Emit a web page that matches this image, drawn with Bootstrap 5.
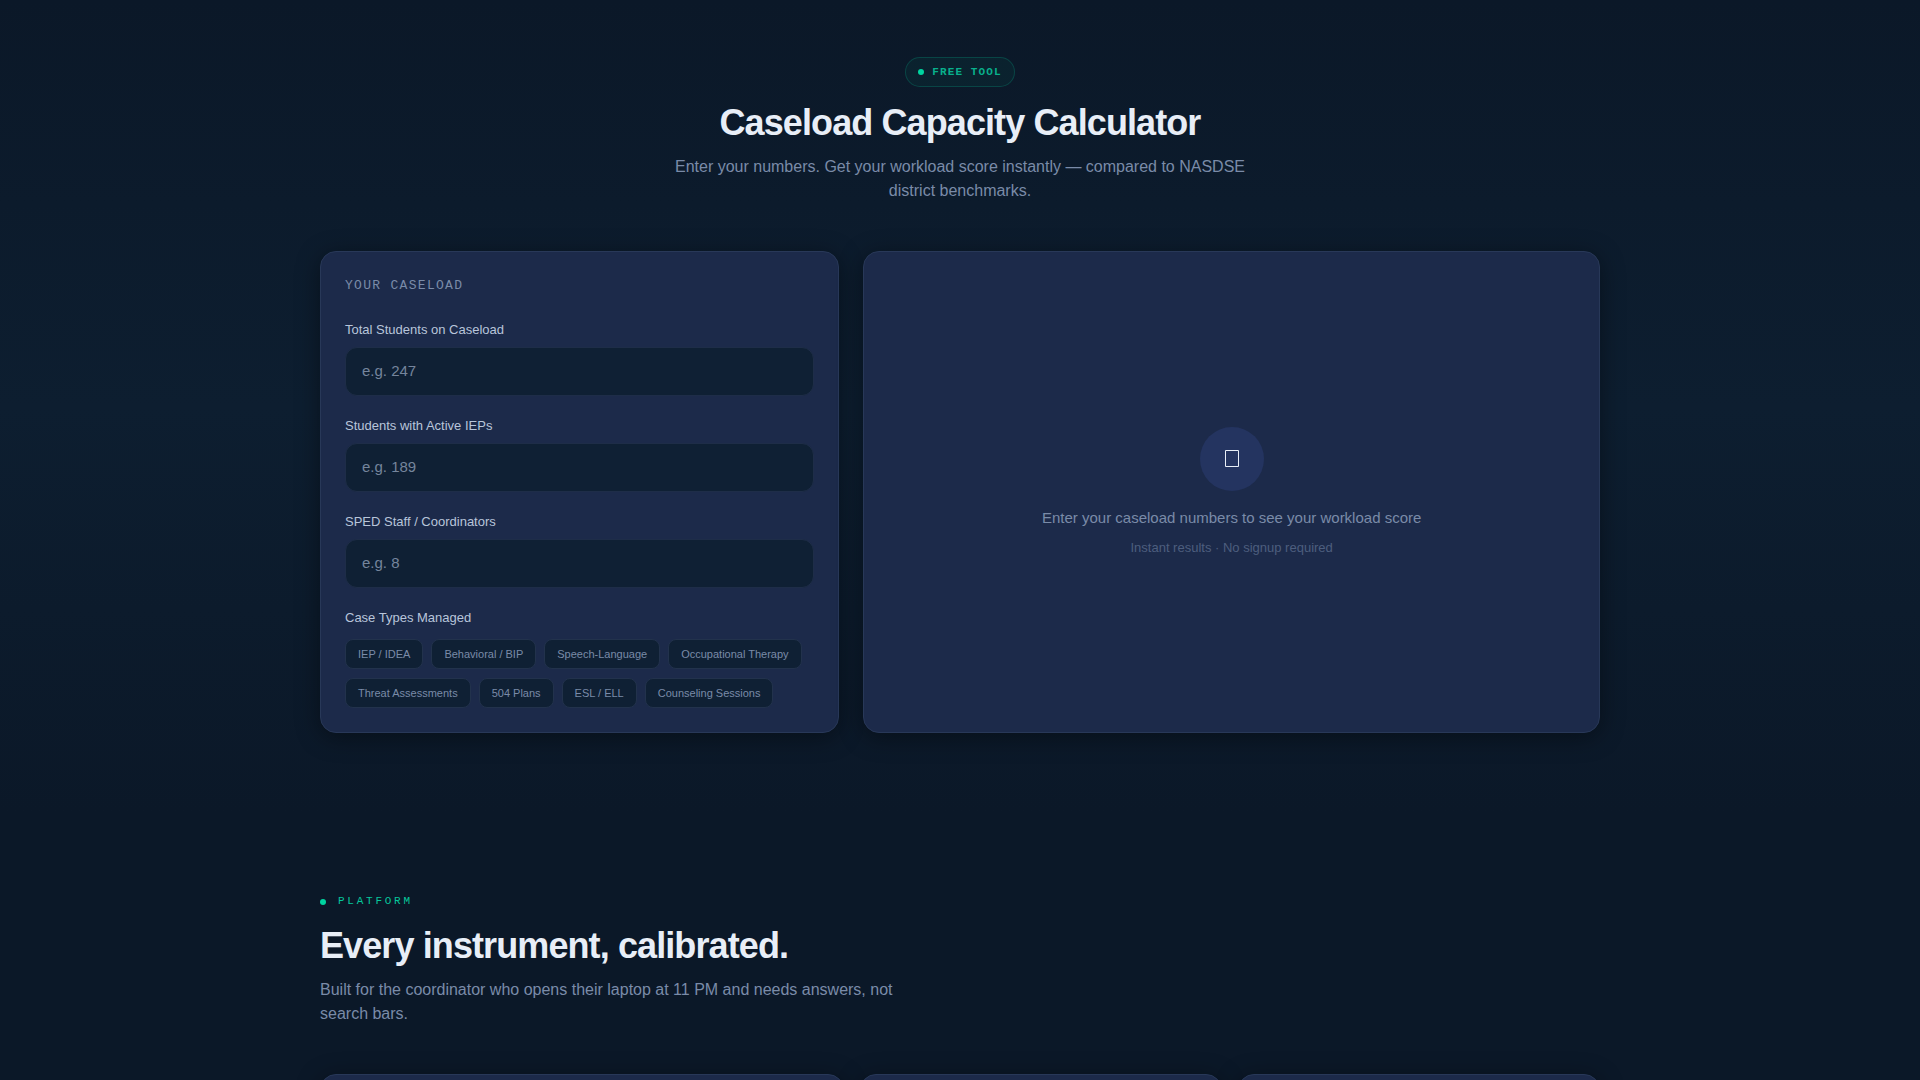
<!DOCTYPE html>
<html lang="en">
<head>
<meta charset="utf-8">
<meta name="viewport" content="width=device-width, initial-scale=1">
<title>Caseload Capacity Calculator</title>
<link href="https://cdn.jsdelivr.net/npm/bootstrap@5.3.0/dist/css/bootstrap.min.css" rel="stylesheet">
<style>
:root { --navy: #0b1828; --panel: #1c2a4a; --well: #0f2034; --mint: #00d4a0; --ice: #e8eef7; --muted-ink: #7a8ba8; --edge: #283858; }
html { overflow-x: hidden; scrollbar-width: none; }
html::-webkit-scrollbar { display: none; }
body { background: var(--navy); color: var(--ice); font-family: "Liberation Sans", Arial, sans-serif; font-size: 16px; line-height: 24px; }
.wrap { max-width: 1328px; padding: 0 24px; }
.calculator { background: linear-gradient(180deg, #0b1828 0%, #0d1e30 50%, #0b1828 100%); padding: 57px 0 80px; }
.platform { padding: 80px 0; }
.mono { font-family: "Liberation Mono", "Courier New", monospace; text-transform: uppercase; }
.tool-pill { height: 30px; padding: 0 12px; font-size: 11px; font-weight: 600; letter-spacing: 0.1em; color: #08b08c; background: rgba(0, 212, 160, .05); border: 1px solid rgba(0, 212, 160, .2); }
.dot { width: 6px; height: 6px; background: var(--mint); border-radius: 50%; }
.headline { margin-bottom: 12px; font-size: 36px; line-height: 40px; font-weight: 700; letter-spacing: -0.025em; }
.intro { max-width: 576px; color: var(--muted-ink); }
.panel { background: var(--panel); border: 1px solid var(--edge); border-radius: 16px; box-shadow: 0 4px 24px rgba(0, 0, 0, .4); }
.panel-title { font-size: 13px; line-height: 20px; font-weight: 400; letter-spacing: 0.1em; color: var(--muted-ink); }
.field-group { margin-bottom: 20px; }
.field-label { font-size: 13px; line-height: 20px; color: #b8c5da; }
.field-group .field-label { margin-bottom: 7px; }
.field-input { height: 49px; padding: 0 16px 2px; font-size: 15px; color: var(--ice); background: var(--well); border: 1px solid #1e2d48; border-radius: 12px; }
.field-input:focus { color: var(--ice); background: var(--well); border-color: var(--mint); box-shadow: none; }
.field-input::placeholder { color: #75859c; opacity: 1; }
.chip-list { gap: 9px 8px; margin-top: 11px; }
.chip { height: 30px; padding: 0 12px; font-size: 11px; line-height: 16px; color: var(--muted-ink); background: var(--well); border: 1px solid #22324c; border-radius: 8px; }
.orb { width: 64px; height: 64px; background: #243460; }
.orb svg { width: 14px; height: 17px; }
.empty-title { margin-bottom: 9px; font-size: 15px; line-height: 22px; color: var(--muted-ink); }
.empty-note { font-size: 13px; line-height: 20px; color: #4d5e7e; }
.eyebrow { font-size: 11px; line-height: 17px; letter-spacing: 0.25em; color: #06c79b; }
.feature-grid { display: grid; grid-template-columns: 524fr 362fr 362fr; gap: 16px; }
.feature { min-height: 280px; }
</style>
</head>
<body>
<main>
<section class="calculator">
  <div class="container-fluid wrap">
    <header class="text-center d-flex flex-column align-items-center">
      <div class="mono tool-pill rounded-pill d-inline-flex align-items-center gap-2"><span class="dot"></span>Free Tool</div>
      <h1 class="headline mt-3">Caseload Capacity Calculator</h1>
      <p class="intro mb-5">Enter your numbers. Get your workload score instantly — compared to NASDSE district benchmarks.</p>
    </header>
    <div class="row g-4">
      <div class="col-lg-5">
        <form class="panel p-4">
          <h2 class="mono panel-title mb-4">Your Caseload</h2>
          <div class="field-group"><label class="field-label d-block" for="total">Total Students on Caseload</label><input class="form-control field-input" id="total" type="text" inputmode="numeric" placeholder="e.g. 247"></div>
          <div class="field-group"><label class="field-label d-block" for="ieps">Students with Active IEPs</label><input class="form-control field-input" id="ieps" type="text" inputmode="numeric" placeholder="e.g. 189"></div>
          <div class="field-group"><label class="field-label d-block" for="staff">SPED Staff / Coordinators</label><input class="form-control field-input" id="staff" type="text" inputmode="numeric" placeholder="e.g. 8"></div>
          <div class="field-label" id="types">Case Types Managed</div>
          <div class="chip-list d-flex flex-wrap" role="group" aria-labelledby="types">
            <button type="button" class="chip">IEP / IDEA</button>
            <button type="button" class="chip">Behavioral / BIP</button>
            <button type="button" class="chip">Speech-Language</button>
            <button type="button" class="chip">Occupational Therapy</button>
            <button type="button" class="chip">Threat Assessments</button>
            <button type="button" class="chip">504 Plans</button>
            <button type="button" class="chip">ESL / ELL</button>
            <button type="button" class="chip">Counseling Sessions</button>
          </div>
        </form>
      </div>
      <div class="col-lg-7">
        <div class="panel h-100 p-4 d-flex flex-column align-items-center justify-content-center text-center">
          <div class="orb rounded-circle d-flex align-items-center justify-content-center mb-3"><svg viewBox="0 0 14 17" fill="none" stroke="#e8eef7" aria-hidden="true"><path d="M.5.5h13v16H.5z"/></svg></div>
          <p class="empty-title">Enter your caseload numbers to see your workload score</p>
          <p class="empty-note mb-0">Instant results · No signup required</p>
        </div>
      </div>
    </div>
  </div>
</section>
<section class="platform">
  <div class="container-fluid wrap">
    <div class="mono eyebrow d-flex align-items-center mb-3"><span class="dot me-2"></span><span class="ms-1">Platform</span></div>
    <h2 class="headline">Every instrument, calibrated.</h2>
    <p class="intro mb-5">Built for the coordinator who opens their laptop at 11 PM and needs answers, not search bars.</p>
    <div class="feature-grid">
      <article class="panel feature"></article>
      <article class="panel feature"></article>
      <article class="panel feature"></article>
    </div>
  </div>
</section>
</main>
<script src="https://cdn.jsdelivr.net/npm/bootstrap@5.3.0/dist/js/bootstrap.bundle.min.js"></script>
</body>
</html>
